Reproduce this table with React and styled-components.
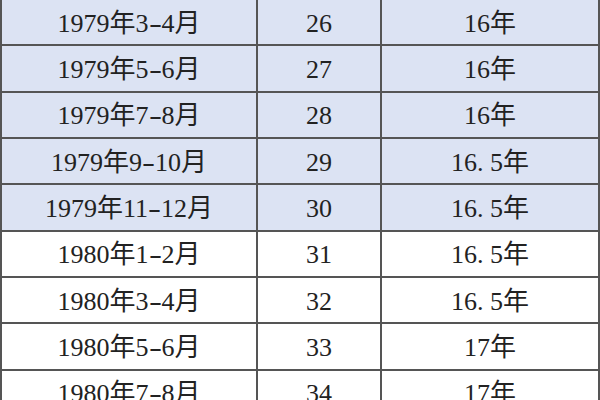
import React from "react";
import styled, { createGlobalStyle } from "styled-components";

const rows = [
  { month: "1979年3-4月", age: "26", years: "16年", shaded: true },
  { month: "1979年5-6月", age: "27", years: "16年", shaded: true },
  { month: "1979年7-8月", age: "28", years: "16年", shaded: true },
  { month: "1979年9-10月", age: "29", years: "16.5年", shaded: true },
  { month: "1979年11-12月", age: "30", years: "16.5年", shaded: true },
  { month: "1980年1-2月", age: "31", years: "16.5年" },
  { month: "1980年3-4月", age: "32", years: "16.5年" },
  { month: "1980年5-6月", age: "33", years: "17年" },
  { month: "1980年7-8月", age: "34", years: "17年" },
];

const GlobalStyle = createGlobalStyle`
  html, body {
    margin: 0;
    padding: 0;
    background: #ffffff;
  }
  body {
    width: 600px;
    height: 400px;
    overflow: hidden;
  }
`;

const Table = styled.div`
  width: 600px;
  margin-top: -2px;
  border-top: 2px solid #555;
  border-left: 2px solid #555;
  box-sizing: border-box;
`;

const Row = styled.div`
  display: grid;
  grid-template-columns: 256px 124px 218px;
  height: 46.33px;
  background: ${(props) => (props.shaded ? "#dce3f3" : "#ffffff")};
`;

const Cell = styled.div`
  display: flex;
  align-items: center;
  justify-content: center;
  padding-top: 3px;
  border-right: 2px solid #555;
  border-bottom: 2px solid #555;
  box-sizing: border-box;
  font-family: "Liberation Serif", "Noto Sans CJK SC", serif;
  font-size: 26px;
  line-height: 1;
  color: #222;
  white-space: nowrap;
`;

// half-width punctuation like the original's 宋体 glyphs
const Punct = styled.span`
  display: inline-block;
  width: 0.5em;
  text-align: ${(props) => (props.dot ? "left" : "center")};
  transform: ${(props) => (props.dot ? "none" : "scaleX(1.5)")};
`;

const renderText = (text) =>
  text.split(/([.-])/).map((part, i) =>
    part === "." || part === "-" ? (
      <Punct key={i} dot={part === "."}>
        {part}
      </Punct>
    ) : (
      part
    )
  );

const App = () => {
  return (
    <>
      <GlobalStyle />
      <Table>
        {rows.map((row, index) => (
          <Row key={index} shaded={row.shaded}>
            <Cell>{renderText(row.month)}</Cell>
            <Cell>{row.age}</Cell>
            <Cell>{renderText(row.years)}</Cell>
          </Row>
        ))}
      </Table>
    </>
  );
};

export default App;
